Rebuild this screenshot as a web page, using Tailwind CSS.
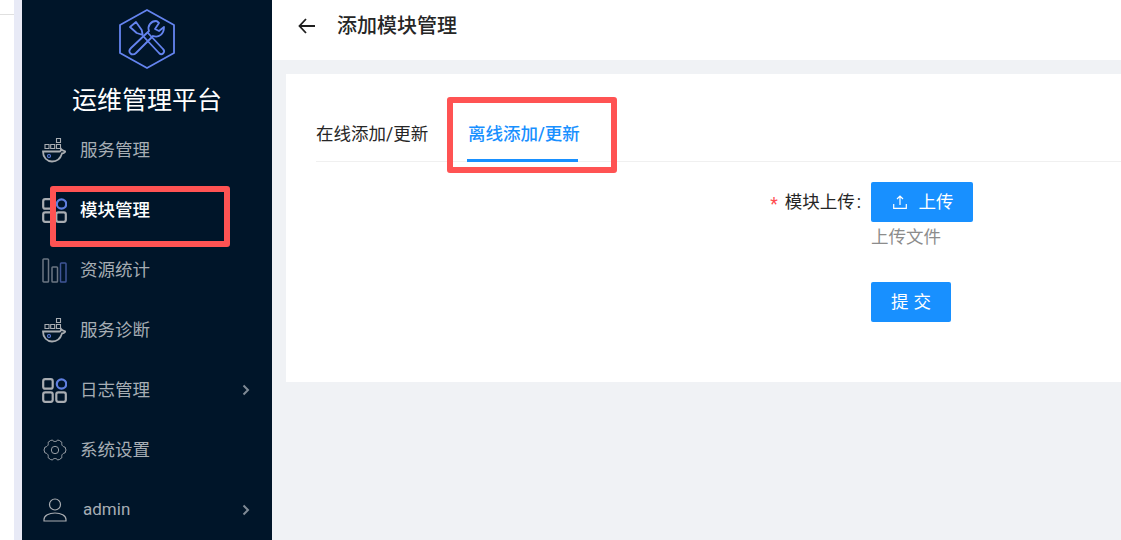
<!DOCTYPE html>
<html lang="zh">
<head>
    <meta charset="UTF-8">
    <title>运维管理平台</title>
    <script src="https://cdn.jsdelivr.net/npm/@tailwindcss/browser@4"></script>
</head>
<body class="h-[540px] w-[1121px] overflow-hidden flex bg-[#f0f2f5] font-['Roboto','Noto_Sans_CJK_SC',sans-serif]">
    <!-- left gutter -->
    <div class="w-[14px] bg-white shrink-0">
        <div class="mt-[14px] border-t border-[#e0e0e0]"></div>
    </div>
    <div class="w-[8px] bg-[#e8eaf6] shrink-0"></div>

    <!-- sidebar -->
    <aside class="relative w-[250px] shrink-0 bg-[#001529] flex flex-col">
        <div class="h-[120px] flex flex-col items-center pt-[9px]">
            <svg class="w-[58px] h-[60px]" viewBox="0 0 58 60" fill="none" stroke="#6484f0" stroke-width="1.800" stroke-linejoin="round" stroke-linecap="round">
                <path d="M29 1 L56 16 V44 L29 59 L2 44 V16 Z" />
                <path d="M12 18 L18 13 L23.700 21 L24.700 26 L18.700 24 Z" />
                <path d="M26 28 L41 44 C44 47 48 43 45 40 L30 24" />
                <path d="M38 12 C33 12 29 17 31 22 L13 39 C9 43 14 48 18 44 L35 27 C41 29 46 25 46 18 L41 22 L37 20 L41 14 C40 13 39 12 38 12 Z" />
            </svg>
            <div class="mt-[16px] text-[25px] leading-[32px] text-white">运维管理平台</div>
        </div>

        <nav class="flex flex-col">
            <a class="h-[60px] flex items-center pl-[20px] text-[#a6adb4] text-[17.5px]">
                <svg class="w-[24px] h-[26px] shrink-0" viewBox="0 0 24 26" fill="none" stroke="#a9adb2" stroke-width="1.100">
                    <path d="M14.500 1.500h4v4h-4zM3 7.500h4v4H3zM8.700 7.500h4v4h-4zM14.500 7.500h4v4h-4z" />
                    <path d="M1 14.500h16.500c1 0 1.500-1 1.500-2.500 1 1.500 3 2 4.500 2.500-1 1.500-2.500 2-3.500 2-1.500 5-5.500 8-10 8-5 0-9-4-9-10z" stroke-width="1.800" />
                    <circle cx="7" cy="19" r="1.500" stroke="#5f7fe0" />
                </svg>
                <span class="ml-[14px]">服务管理</span>
            </a>
            <a class="h-[60px] flex items-center pl-[20px] text-white text-[17.5px] font-medium">
                <svg class="w-[25px] h-[25px] shrink-0" viewBox="0 0 25 25" fill="none" stroke="#a9adb2" stroke-width="2.200">
                    <rect x="1.200" y="1.200" width="9.500" height="9.500" rx="2" />
                    <circle cx="19.500" cy="6" r="4.700" stroke="#5f7fe0" />
                    <rect x="1.200" y="14.300" width="9.500" height="9.500" rx="2" />
                    <rect x="14.300" y="14.300" width="9.500" height="9.500" rx="2" />
                </svg>
                <span class="ml-[13px]">模块管理</span>
            </a>
            <a class="h-[60px] flex items-center pl-[20px] text-[#a6adb4] text-[17.5px]">
                <svg class="w-[25px] h-[25px] shrink-0" viewBox="0 0 25 25" fill="none" stroke-width="1.500">
                    <rect x="1" y="1" width="5.500" height="23" rx="0.800" stroke="#6b7682" />
                    <rect x="10" y="9" width="5.500" height="15" rx="0.800" stroke="#6b7682" />
                    <rect x="18.500" y="5" width="5.500" height="19" rx="0.800" stroke="#3f5597" />
                </svg>
                <span class="ml-[13px]">资源统计</span>
            </a>
            <a class="h-[60px] flex items-center pl-[20px] text-[#a6adb4] text-[17.5px]">
                <svg class="w-[24px] h-[26px] shrink-0" viewBox="0 0 24 26" fill="none" stroke="#a9adb2" stroke-width="1.100">
                    <path d="M14.500 1.500h4v4h-4zM3 7.500h4v4H3zM8.700 7.500h4v4h-4zM14.500 7.500h4v4h-4z" />
                    <path d="M1 14.500h16.500c1 0 1.500-1 1.500-2.500 1 1.500 3 2 4.500 2.500-1 1.500-2.500 2-3.500 2-1.500 5-5.500 8-10 8-5 0-9-4-9-10z" stroke-width="1.800" />
                    <circle cx="7" cy="19" r="1.500" stroke="#5f7fe0" />
                </svg>
                <span class="ml-[14px]">服务诊断</span>
            </a>
            <a class="h-[60px] flex items-center pl-[20px] pr-[22px] text-[#a6adb4] text-[17.5px]">
                <svg class="w-[25px] h-[25px] shrink-0" viewBox="0 0 25 25" fill="none" stroke="#a9adb2" stroke-width="2.200">
                    <rect x="1.200" y="1.200" width="9.500" height="9.500" rx="2" />
                    <circle cx="19.500" cy="6" r="4.700" stroke="#5f7fe0" />
                    <rect x="1.200" y="14.300" width="9.500" height="9.500" rx="2" />
                    <rect x="14.300" y="14.300" width="9.500" height="9.500" rx="2" />
                </svg>
                <span class="ml-[13px]">日志管理</span>
                <svg class="ml-auto w-[8px] h-[12px]" viewBox="0 0 8 12" fill="none" stroke="#7f8a95" stroke-width="2"><path d="M1.500 1.500 6 6 1.500 10.500" /></svg>
            </a>
            <a class="h-[60px] flex items-center pl-[21px] text-[#a6adb4] text-[17.5px]">
                <svg class="w-[24px] h-[24px] shrink-0" viewBox="0 0 24 24" fill="none" stroke="#a9adb2" stroke-width="0.900" stroke-linejoin="round">
                    <path d="M7.500 2.500 9.500 2C10 4 14 4 14.500 2L16.500 2.500 19 4.500C18 7 20 9 22 9L23 12 22 15C20 15 18 17 19 19.500L16.500 21.500 14.500 22C14 20 10 20 9.500 22L7.500 21.500 5 19.500C6 17 4 15 2 15L1 12 2 9C4 9 6 7 5 4.500Z" />
                    <circle cx="12" cy="12" r="3.700" />
                </svg>
                <span class="ml-[13px]">系统设置</span>
            </a>
            <a class="h-[60px] flex items-center pl-[21px] pr-[22px] text-[#a6adb4] text-[17.5px]">
                <svg class="w-[24px] h-[24px] shrink-0" viewBox="0 0 24 24" fill="none" stroke="#a9adb2" stroke-width="1.200">
                    <circle cx="12" cy="6.500" r="5.500" />
                    <path d="M1 23v-1.500c0-4 5-6.500 11-6.500s11 2.500 11 6.500V23z" />
                </svg>
                <span class="ml-[16px] text-[17px]">admin</span>
                <svg class="ml-auto w-[8px] h-[12px]" viewBox="0 0 8 12" fill="none" stroke="#7f8a95" stroke-width="2"><path d="M1.500 1.500 6 6 1.500 10.500" /></svg>
            </a>
        </nav>

        <!-- red annotation box -->
        <div class="absolute left-[28px] top-[186px] w-[180px] h-[61px] border-[6px] border-[#ff5353] rounded-[3px]"></div>
    </aside>

    <!-- main -->
    <main class="flex-1 min-w-0 flex flex-col">
        <header class="h-[60px] bg-white flex items-center pl-[26px] pb-[8px] shrink-0">
            <svg class="w-[18px] h-[16px]" viewBox="0 0 18 16" fill="none" stroke="#1f1f1f" stroke-width="1.800"><path d="M17 8H1.500M8 1 1.500 8 8 15" /></svg>
            <h1 class="ml-[21px] text-[20px] font-medium text-[#262626]">添加模块管理</h1>
        </header>

        <section class="mt-[14px] ml-[14px] h-[308px] bg-white pl-[30px]">
            <div class="h-[88px] border-b border-[#f0f0f0] flex">
                <div class="pt-[46px] text-[#262626] text-[17.5px] leading-[28px] w-[151px]">在线添加/更新</div>
                <div class="h-[88px] relative pt-[46px] pl-[1px] text-[#1890ff] text-[17.5px] leading-[28px] font-medium w-[112px] whitespace-nowrap">
                    离线添加/更新
                    <div class="absolute bottom-0 left-0 w-[111px] h-[3px] bg-[#1890ff]"></div>
                </div>
            </div>

            <div class="flex mt-[20px]">
                <div class="w-[555px] h-[40px] pt-[1px] flex items-center justify-end text-[17.5px] text-[#262626]">
                    <span class="text-[#ff4d4f] mr-[7px] pt-[3px]">*</span>模块上传<span class="ml-[2px] mr-[10px]">:</span>
                </div>
                <div class="flex flex-col items-start">
                    <button class="w-[102px] h-[40px] pl-[2px] bg-[#1890ff] rounded-[2px] text-white text-[17.5px] flex items-center justify-center">
                        <svg class="w-[14px] h-[14px]" viewBox="0 0 14 14" fill="none" stroke="white" stroke-width="1.200"><path d="M7 10V1M4 4l3-3 3 3M.7 9v4.300h12.600V9" /></svg>
                        <span class="ml-[12px]">上传</span>
                    </button>
                    <div class="text-[17.5px] leading-[30px] text-[#8c8c8c]">上传文件</div>
                    <button class="mt-[30px] w-[80px] h-[40px] bg-[#1890ff] rounded-[2px] text-white text-[17.5px] tracking-[5px] pl-[5px]">提交</button>
                </div>
            </div>
        </section>

        <!-- red annotation box -->
        <div class="absolute left-[447px] top-[97px] w-[170px] h-[76px] border-[6px] border-[#ff5353] rounded-[3px]"></div>
    </main>
</body>
</html>
